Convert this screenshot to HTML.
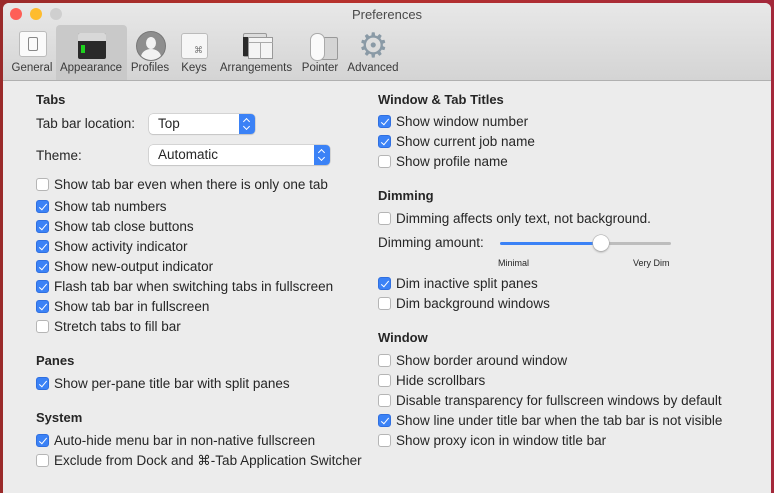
<!DOCTYPE html>
<html><head><style>
body{margin:0;width:774px;height:487px;overflow:hidden;background:linear-gradient(90deg,#9a2a2a,#b8322c 40%,#a3283a);font-family:"Liberation Sans",sans-serif;position:relative}
#win{position:absolute;left:3px;top:3px;width:768px;height:490px;background:#ececec;border-radius:6px 6px 0 0;overflow:hidden}
#tb{position:absolute;left:0;top:0;width:768px;height:77px;background:linear-gradient(#e8e8e8,#d4d4d4);border-bottom:1px solid #b0b0b0}
.dot{position:absolute;top:5px;width:12px;height:12px;border-radius:50%}
.t{position:absolute;font-size:13.5px;color:#262626;line-height:16px;white-space:nowrap}
.h{font-weight:bold;font-size:13px}
.lab{position:absolute;top:59px;font-size:11.5px;color:#3a3a3a;transform:translateX(-50%);white-space:nowrap}
.cb{position:absolute;width:13px;height:13px;border-radius:3px;background:#fff;border:1px solid #b5b5b5;box-sizing:border-box}
.cb.on{background:#3b82f6;border-color:#2f6fe0}
.cb.on::after{content:"";position:absolute;left:4px;top:1px;width:3px;height:7px;border:solid #fff;border-width:0 1.6px 1.6px 0;transform:rotate(40deg)}
.pop{position:absolute;height:20px;background:#fff;border-radius:4px;box-shadow:0 0 0 .5px #bbb,0 1px 1px #ccc;font-size:13.5px;line-height:20px;padding-left:9px;box-sizing:border-box;color:#262626}
.pop i{position:absolute;right:0;top:0;width:16px;height:20px;background:#3b82f6;border-radius:0 4px 4px 0}
.pop i::before,.pop i::after{content:"";position:absolute;left:5px;width:4px;height:4px;border:solid #fff;border-width:1.3px 0 0 1.3px}
.pop i::before{top:5px;transform:rotate(45deg)}
.pop i::after{top:10px;transform:rotate(225deg)}
</style></head><body>
<div id="win">
<div id="tb">
<div class="dot" style="left:7px;background:#fe5f57"></div>
<div class="dot" style="left:27px;background:#febc2e"></div>
<div class="dot" style="left:47px;background:#cfcfcf"></div>
<div style="position:absolute;left:0;width:768px;top:4px;text-align:center;font-size:13px;color:#4a4a4a">Preferences</div>
<div style="position:absolute;left:53px;top:22px;width:71px;height:55px;background:#c9c9c9;border-radius:4px 4px 0 0"></div>
<div style="position:absolute;left:16px;top:28px;width:26px;height:24px;background:#fafafa;border:1px solid #bbb;border-radius:3px"></div>
<div style="position:absolute;left:25px;top:34px;width:8px;height:12px;border:1px solid #888;border-radius:2px"></div>
<div style="position:absolute;left:75px;top:30px;width:28px;height:26px;background:#2a2a2a;border-radius:2px;overflow:hidden"><div style="height:8px;background:#d8d8d8"></div><div style="position:absolute;left:3px;top:12px;width:4px;height:8px;background:#1ed21e"></div></div>
<div style="position:absolute;left:133px;top:28px;width:30px;height:30px;border-radius:50%;background:#8e8e8e;border:1px solid #777;box-sizing:border-box;overflow:hidden"><div style="position:absolute;left:9px;top:5px;width:10px;height:12px;border-radius:50%;background:#f2f2f2"></div><div style="position:absolute;left:4px;top:17px;width:20px;height:16px;border-radius:50% 50% 0 0;background:#f2f2f2"></div></div>
<div style="position:absolute;left:178px;top:30px;width:27px;height:26px;background:#f6f6f6;border:1px solid #bbb;border-radius:3px;font-size:9px;color:#777;text-align:right;box-sizing:border-box;padding:11px 4px 0 0">⌘</div>
<div style="position:absolute;left:240px;top:30px;width:22px;height:22px;background:#dcdcdc;border:1px solid #999;border-radius:2px"></div>
<div style="position:absolute;left:240px;top:34px;width:6px;height:19px;background:#2a2a2a"></div>
<div style="position:absolute;left:245px;top:34px;width:25px;height:22px;background:#f4f4f4;border:1px solid #999;box-sizing:border-box"><div style="position:absolute;left:11px;top:4px;width:1px;height:17px;background:#aaa"></div><div style="position:absolute;left:0;top:4px;width:24px;height:1px;background:#aaa"></div></div>
<div style="position:absolute;left:317px;top:34px;width:16px;height:21px;background:#d4d4d4;border:1px solid #999;border-radius:2px"></div>
<div style="position:absolute;left:307px;top:30px;width:13px;height:26px;background:#fafafa;border:1px solid #aaa;border-radius:7px"></div>
<div style="position:absolute;left:355px;top:26px;font-size:34px;line-height:34px;color:#8a9aa6">⚙</div>
<div class="lab" style="left:29px">General</div>
<div class="lab" style="left:88px">Appearance</div>
<div class="lab" style="left:147px">Profiles</div>
<div class="lab" style="left:191px">Keys</div>
<div class="lab" style="left:253px">Arrangements</div>
<div class="lab" style="left:317px">Pointer</div>
<div class="lab" style="left:370px">Advanced</div>
</div>
</div>

<div class="t h" style="left:36px;top:92px">Tabs</div>
<div class="t" style="left:36px;top:116px">Tab bar location:</div>
<div class="pop" style="left:149px;top:114px;width:106px">Top<i></i></div>
<div class="t" style="left:36px;top:148px">Theme:</div>
<div class="pop" style="left:149px;top:145px;width:181px">Automatic<i></i></div>

<div class="cb" style="left:36px;top:178px"></div><div class="t" style="left:54px;top:177px">Show tab bar even when there is only one tab</div>
<div class="cb on" style="left:36px;top:200px"></div><div class="t" style="left:54px;top:199px">Show tab numbers</div>
<div class="cb on" style="left:36px;top:220px"></div><div class="t" style="left:54px;top:219px">Show tab close buttons</div>
<div class="cb on" style="left:36px;top:240px"></div><div class="t" style="left:54px;top:239px">Show activity indicator</div>
<div class="cb on" style="left:36px;top:260px"></div><div class="t" style="left:54px;top:259px">Show new-output indicator</div>
<div class="cb on" style="left:36px;top:280px"></div><div class="t" style="left:54px;top:279px">Flash tab bar when switching tabs in fullscreen</div>
<div class="cb on" style="left:36px;top:300px"></div><div class="t" style="left:54px;top:299px">Show tab bar in fullscreen</div>
<div class="cb" style="left:36px;top:320px"></div><div class="t" style="left:54px;top:319px">Stretch tabs to fill bar</div>

<div class="t h" style="left:36px;top:353px">Panes</div>
<div class="cb on" style="left:36px;top:377px"></div><div class="t" style="left:54px;top:376px">Show per-pane title bar with split panes</div>

<div class="t h" style="left:36px;top:410px">System</div>
<div class="cb on" style="left:36px;top:434px"></div><div class="t" style="left:54px;top:433px">Auto-hide menu bar in non-native fullscreen</div>
<div class="cb" style="left:36px;top:454px"></div><div class="t" style="left:54px;top:453px">Exclude from Dock and ⌘-Tab Application Switcher</div>

<div class="t h" style="left:378px;top:92px">Window &amp; Tab Titles</div>
<div class="cb on" style="left:378px;top:115px"></div><div class="t" style="left:396px;top:114px">Show window number</div>
<div class="cb on" style="left:378px;top:135px"></div><div class="t" style="left:396px;top:134px">Show current job name</div>
<div class="cb" style="left:378px;top:155px"></div><div class="t" style="left:396px;top:154px">Show profile name</div>

<div class="t h" style="left:378px;top:188px">Dimming</div>
<div class="cb" style="left:378px;top:212px"></div><div class="t" style="left:396px;top:211px">Dimming affects only text, not background.</div>
<div class="t" style="left:378px;top:235px">Dimming amount:</div>
<div style="position:absolute;left:500px;top:242px;width:101px;height:3px;background:#3b82f6;border-radius:2px"></div>
<div style="position:absolute;left:601px;top:242px;width:70px;height:3px;background:#bdbdbd;border-radius:2px"></div>
<div style="position:absolute;left:593px;top:235px;width:16px;height:16px;border-radius:50%;background:#fff;box-shadow:0 0 0 .5px #aaa,0 1px 2px #999"></div>
<div class="t" style="left:498px;top:255px;font-size:9px">Minimal</div>
<div class="t" style="left:633px;top:255px;font-size:9px">Very Dim</div>
<div class="cb on" style="left:378px;top:277px"></div><div class="t" style="left:396px;top:276px">Dim inactive split panes</div>
<div class="cb" style="left:378px;top:297px"></div><div class="t" style="left:396px;top:296px">Dim background windows</div>

<div class="t h" style="left:378px;top:330px">Window</div>
<div class="cb" style="left:378px;top:354px"></div><div class="t" style="left:396px;top:353px">Show border around window</div>
<div class="cb" style="left:378px;top:374px"></div><div class="t" style="left:396px;top:373px">Hide scrollbars</div>
<div class="cb" style="left:378px;top:394px"></div><div class="t" style="left:396px;top:393px">Disable transparency for fullscreen windows by default</div>
<div class="cb on" style="left:378px;top:414px"></div><div class="t" style="left:396px;top:413px">Show line under title bar when the tab bar is not visible</div>
<div class="cb" style="left:378px;top:434px"></div><div class="t" style="left:396px;top:433px">Show proxy icon in window title bar</div>
</body></html>
